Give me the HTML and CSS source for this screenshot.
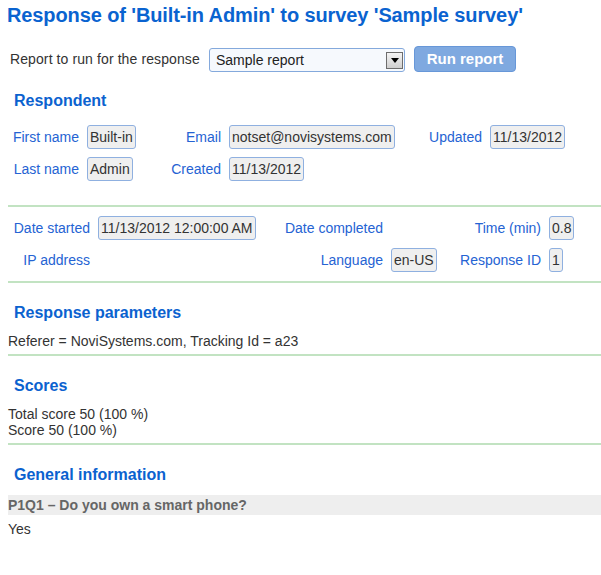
FILE: index.html
```
<!DOCTYPE html>
<html>
<head>
<meta charset="utf-8">
<link rel="stylesheet" href="styles.css">
</head>
<body>
<div class="page">
  <h1 class="title">Response of 'Built-in Admin' to survey 'Sample survey'</h1>

  <div class="report-row">
    <span class="report-label">Report to run for the response</span>
    <div class="select">
      <span class="select-text">Sample report</span>
      <span class="select-arrow"><svg width="8" height="5" viewBox="0 0 8 5"><path d="M0 0H8L4 5Z" fill="#000"/></svg></span>
    </div>
    <button class="run-btn">Run report</button>
  </div>

  <section class="section sec-respondent">
    <h2 class="heading">Respondent</h2>
    <div class="grid grid-resp">
      <span class="lbl">First name</span>
      <span class="val">Built-in</span>
      <span class="lbl">Email</span>
      <span class="val">notset@novisystems.com</span>
      <span class="lbl">Updated</span>
      <span class="val">11/13/2012</span>

      <span class="lbl">Last name</span>
      <span class="val">Admin</span>
      <span class="lbl">Created</span>
      <span class="val">11/13/2012</span>
      <span></span><span></span>
    </div>
  </section>

  <section class="section sec-dates">
    <div class="grid grid-dates">
      <span class="lbl">Date started</span>
      <span class="val">11/13/2012 12:00:00 AM</span>
      <span class="lbl">Date completed</span>
      <span></span>
      <span class="lbl">Time (min)</span>
      <span class="val">0.8</span>

      <span class="lbl">IP address</span>
      <span></span>
      <span class="lbl">Language</span>
      <span class="val">en-US</span>
      <span class="lbl">Response ID</span>
      <span class="val">1</span>
    </div>
  </section>

  <section class="section sec-text">
    <h2 class="heading">Response parameters</h2>
    <div class="text">Referer = NoviSystems.com, Tracking Id = a23</div>
  </section>

  <section class="section sec-text">
    <h2 class="heading">Scores</h2>
    <div class="text">Total score 50 (100 %)</div>
    <div class="text">Score 50 (100 %)</div>
  </section>

  <section class="sec-general">
    <h2 class="heading">General information</h2>
    <div class="question">P1Q1 – Do you own a smart phone?</div>
    <div class="answer">Yes</div>
  </section>
</div>
</body>
</html>
```

FILE: styles.css
```
html, body {
  margin: 0;
  padding: 0;
  background: #fff;
}
body {
  font-family: "Liberation Sans", Arial, sans-serif;
  font-size: 14px;
  color: #333;
}
.page {
  padding-left: 8px;
}
.title {
  margin: 0 0 0 -1px;
  padding-top: 4px;
  font-size: 20px;
  line-height: 23px;
  font-weight: bold;
  color: #0a63d0;
  letter-spacing: -0.11px;
}
.report-row {
  display: flex;
  align-items: center;
  margin-top: 19px;
  height: 26px;
  padding-left: 2px;
}
.report-label {
  width: 199px;
  line-height: 16px;
  letter-spacing: 0.1px;
}
.select {
  box-sizing: border-box;
  width: 196px;
  height: 24px;
  margin-top: 2px;
  border: 1px solid #84a9dc;
  border-radius: 3px;
  background: #f6f9fd;
  display: flex;
  align-items: center;
  justify-content: space-between;
  padding: 0 1px 0 6px;
}
.select-text {
  line-height: 16px;
  color: #222;
}
.select-arrow {
  box-sizing: border-box;
  width: 17px;
  height: 17px;
  border: 1px solid #6d6d6d;
  background: linear-gradient(#f4f4f4, #cfcfcf);
  display: flex;
  align-items: center;
  justify-content: center;
}
.run-btn {
  box-sizing: border-box;
  margin-left: 9px;
  width: 102px;
  height: 26px;
  margin-top: -1px;
  border: 1px solid #6797d8;
  border-radius: 4px;
  background: #7fa9e0;
  color: #fff;
  font-family: "Liberation Sans", Arial, sans-serif;
  font-size: 15px;
  font-weight: bold;
  padding: 0;
  line-height: 22px;
}
.section {
  border-bottom: 2px solid #c2e3c2;
}
.heading {
  margin: 21px 0 0;
  padding-left: 6px;
  font-size: 16px;
  line-height: 18px;
  font-weight: bold;
  color: #0b62cf;
}
.sec-respondent .heading {
  margin-top: 20px;
}
.grid {
  display: grid;
  column-gap: 8px;
  row-gap: 8px;
  grid-auto-rows: 24px;
  align-items: center;
}
.grid-resp {
  grid-template-columns: 71px 63px 63px 165px 80px auto;
  margin-top: 15px;
  padding-bottom: 24px;
}
.grid-dates {
  grid-template-columns: 82px 162px 115px 45px 97px auto;
  padding: 9px 0 9px;
}
.lbl {
  text-align: right;
  color: #2563d3;
  line-height: 16px;
  white-space: nowrap;
}
.val {
  justify-self: start;
  box-sizing: border-box;
  height: 24px;
  line-height: 22px;
  padding: 0 2px;
  border: 1px solid #8fb0e0;
  border-radius: 3px;
  background: #efefef;
  color: #333;
  white-space: nowrap;
}
.sec-text .heading {
  margin-bottom: 11px;
}
.sec-text {
  padding-bottom: 5px;
}
.text {
  line-height: 16px;
}
.sec-general .heading {
  margin-bottom: 11px;
}
.question {
  background: #eeeeee;
  height: 20px;
  line-height: 20px;
  font-weight: bold;
  color: #666;
  padding-left: 0;
}
.answer {
  margin-top: 6px;
  line-height: 16px;
}
```
